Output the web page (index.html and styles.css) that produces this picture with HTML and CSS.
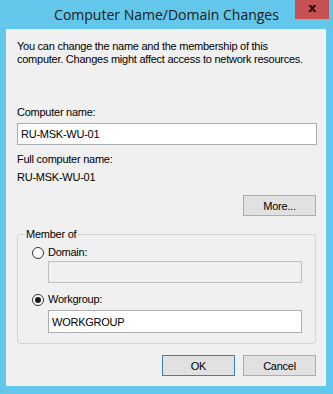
FILE: index.html
```html
<!doctype html>
<html lang="en">
  <head>
    <meta charset="UTF-8" />
    <title>Computer Name/Domain Changes</title>
    <link rel="stylesheet" href="styles.css">
  </head>
  <body>
    <div class="window">
      <div class="titlebar">
        <div class="title">Computer Name/Domain Changes</div>
        <div class="close-btn">x</div>
      </div>
      <div class="client">
        <p class="intro">You can change the name and the membership of this<br>computer. Changes might affect access to network resources.</p>

        <div class="label label-first">Computer name:</div>
        <input class="textbox" type="text" value="RU-MSK-WU-01" />

        <div class="label label-full">Full computer name:</div>
        <div class="label">RU-MSK-WU-01</div>

        <div class="more-row">
          <button class="btn">More...</button>
        </div>

        <fieldset class="group">
          <legend>Member of</legend>
          <div class="group-body">
            <div class="radio-row">
              <span class="radio"></span>
              <span>Domain:</span>
            </div>
            <input class="textbox textbox-disabled" type="text" disabled />

            <div class="radio-row radio-row-second">
              <span class="radio checked"></span>
              <span>Workgroup:</span>
            </div>
            <input class="textbox textbox-group" type="text" value="WORKGROUP" />
          </div>
        </fieldset>

        <div class="actions">
          <button class="btn btn-default">OK</button>
          <button class="btn">Cancel</button>
        </div>
      </div>
    </div>
  </body>
</html>
```

FILE: styles.css
```css
* {
  margin: 0;
  padding: 0;
  box-sizing: border-box;
}

body {
  background: #62c7ea;
  font-family: 'Liberation Sans', Arial, sans-serif;
  font-size: 11px;
  line-height: 13px;
  letter-spacing: -0.25px;
  color: #000000;
}

.window {
  width: 333px;
  height: 394px;
  display: flex;
  flex-direction: column;
}

.titlebar {
  height: 29px;
  display: flex;
  align-items: flex-start;
  padding-left: 38px;
}

.title {
  flex: 1;
  text-align: center;
  font-family: 'Open Sans', 'Noto Sans', sans-serif;
  font-size: 14px;
  letter-spacing: 0;
  line-height: 20px;
  padding-top: 5px;
  color: #1b1b1b;
}

.close-btn {
  width: 34px;
  height: 19px;
  margin-right: 4px;
  background: #c75050;
  color: #111111;
  font-family: 'DejaVu Sans', sans-serif;
  font-size: 13px;
  font-weight: bold;
  line-height: 16px;
  text-align: center;
}

.client {
  flex: 1;
  margin: 0 7px 8px 6px;
  background: #f0f0f0;
  padding: 11px 10px 10px 11px;
}

.label-first {
  margin-top: 40px;
}

.label-full {
  margin-top: 8px;
  margin-bottom: 5px;
}

.textbox {
  display: block;
  width: 300px;
  height: 22px;
  margin-top: 4px;
  padding: 0 3px;
  border: 1px solid #abadb3;
  background: #ffffff;
  font-family: inherit;
  font-size: 11px;
  letter-spacing: -0.25px;
  color: #000000;
  outline: none;
}

.textbox-disabled {
  width: 254px;
  margin-left: 16px;
  margin-top: 2px;
  background: #f0f0f0;
  border-color: #bfbfbf;
}

.textbox-group {
  width: 254px;
  margin-left: 16px;
  height: 23px;
}

.more-row {
  display: flex;
  justify-content: flex-end;
  margin-top: 11px;
}

.btn {
  width: 73px;
  height: 21px;
  background: #e1e1e1;
  border: 1px solid #adadad;
  font-family: inherit;
  font-size: 11px;
  letter-spacing: -0.25px;
  color: #000000;
}

.btn-default {
  border-color: #3c7fb1;
}

.group {
  width: 299px;
  margin-top: 12px;
  border: 1px solid #d5d5d5;
  border-radius: 3px;
  padding: 0;
}

.group legend {
  margin-left: 7px;
  padding: 0 1px;
}

.group-body {
  padding: 5px 0 10px 14px;
}

.radio-row {
  display: flex;
  align-items: center;
  gap: 4px;
  height: 13px;
}

.radio-row-second {
  margin-top: 10px;
}

.radio {
  width: 12px;
  height: 12px;
  border: 1px solid #333333;
  border-radius: 50%;
  background: #ffffff;
  display: flex;
  align-items: center;
  justify-content: center;
}

.radio.checked::after {
  content: '';
  width: 6px;
  height: 6px;
  border-radius: 50%;
  background: #1a1a1a;
}

.actions {
  display: flex;
  justify-content: flex-end;
  gap: 8px;
  margin-top: 11px;
}
```
